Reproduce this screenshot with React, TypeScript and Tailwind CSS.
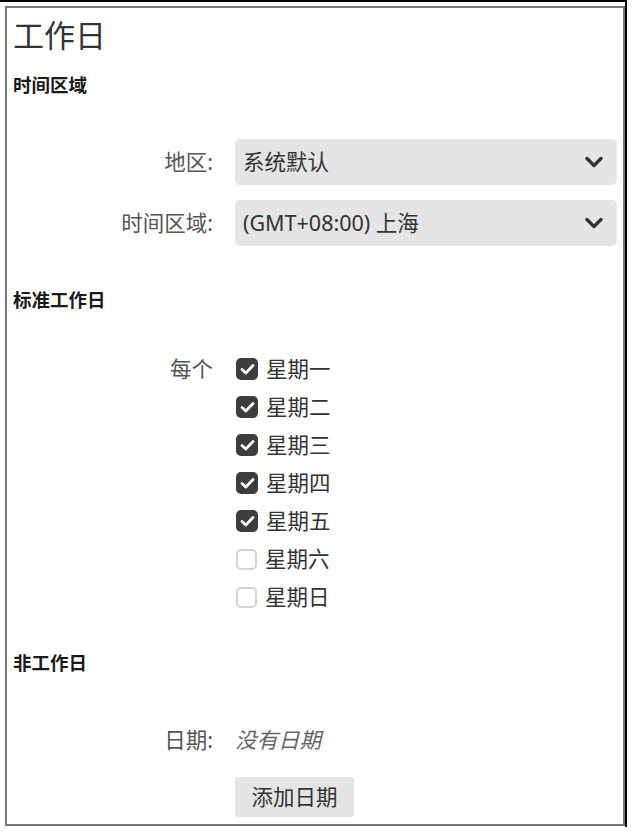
const font = { fontFamily: '"Noto Sans", "Noto Sans CJK SC", sans-serif' };

const days = [
  { name: "星期一", on: true },
  { name: "星期二", on: true },
  { name: "星期三", on: true },
  { name: "星期四", on: true },
  { name: "星期五", on: true },
  { name: "星期六", on: false },
  { name: "星期日", on: false },
];

function Chevron() {
  return (
    <svg width="18" height="12" viewBox="0 0 18 12" fill="none">
      <path
        d="M2 2.5 L9 9.5 L16 2.5"
        stroke="#333"
        strokeWidth="3.4"
        strokeLinecap="round"
        strokeLinejoin="round"
      />
    </svg>
  );
}

function Select({ value }: { value: string }) {
  return (
    <div className="flex h-[46px] items-center justify-between rounded-[5px] bg-[#e5e5e5] pl-[8px] pr-[14px] text-[21.5px] text-[#333]">
      <span>{value}</span>
      <Chevron />
    </div>
  );
}

function Checkbox({ on }: { on: boolean }) {
  if (!on) {
    return (
      <span className="block h-[21px] w-[21px] rounded-[5px] border-2 border-[#d4d4d4] bg-white" />
    );
  }
  return (
    <span className="grid h-[22px] w-[22px] place-items-center rounded-[5px] bg-[#3d3d3d]">
      <svg width="15" height="12" viewBox="0 0 15 12" fill="none">
        <path
          d="M2 6.5 L5.8 10 L13 2.5"
          stroke="#fff"
          strokeWidth="2.8"
          strokeLinecap="round"
          strokeLinejoin="round"
        />
      </svg>
    </span>
  );
}

function Row({ label, children, className = "" }: { label: string; children: React.ReactNode; className?: string }) {
  return (
    <div className={`flex items-center ${className}`}>
      <div className="w-[200px] shrink-0 text-right text-[21.5px] text-[#555]">{label}</div>
      <div className="ml-[22px] mr-[6px] flex-1">{children}</div>
    </div>
  );
}

export default function App() {
  return (
    <div className="w-[627px] border-t-2 border-r-2 border-black bg-white pl-[5px] pt-[4px] pb-[1px]" style={font}>
      <div className="h-[820px] w-full border-2 border-[#777] pl-[6px] pt-[7px]">
        {/* Title */}
        <h1 className="text-[31px] leading-[40px] text-[#333]">工作日</h1>

        {/* Time zone */}
        <h2 className="mt-[18px] text-[18.5px] font-bold leading-[24px] text-[#1a1a1a]">时间区域</h2>
        <div className="mt-[42px] flex flex-col gap-[15px]">
          <Row label="地区:">
            <Select value="系统默认" />
          </Row>
          <Row label="时间区域:">
            <Select value="(GMT+08:00) 上海" />
          </Row>
        </div>

        {/* Standard working days */}
        <h2 className="mt-[42px] text-[18.5px] font-bold leading-[24px] text-[#1a1a1a]">标准工作日</h2>
        <div className="mt-[38px] flex">
          <div className="w-[200px] shrink-0 text-right text-[21.5px] leading-[38px] text-[#555]">每个</div>
          <div className="ml-[23px] flex flex-col">
            {days.map((d) => (
              <div key={d.name} className="flex h-[38px] items-center gap-[8px]">
                <Checkbox on={d.on} />
                <span className="text-[21.5px] text-[#333]">{d.name}</span>
              </div>
            ))}
          </div>
        </div>

        {/* Non working days */}
        <h2 className="mt-[35px] text-[18.5px] font-bold leading-[24px] text-[#1a1a1a]">非工作日</h2>
        <Row label="日期:" className="mt-[46px] h-[38px]">
          <span className="text-[21.5px] italic text-[#666]">没有日期</span>
        </Row>
        <div className="mt-[18px] pl-[222px]">
          <button className="h-[40px] w-[119px] rounded-[3px] bg-[#e5e5e5] text-[21.5px] text-[#333]">添加日期</button>
        </div>
      </div>
    </div>
  );
}
